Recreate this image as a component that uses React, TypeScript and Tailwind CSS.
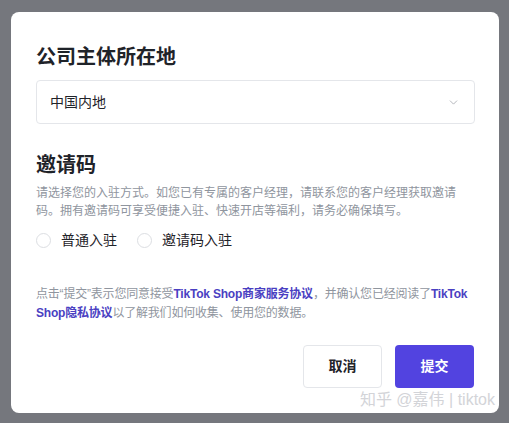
import { ChevronDown } from "lucide-react"

function Radio({ label }: { label: string }) {
  return (
    <label className="flex items-center gap-[10px] cursor-pointer">
      <span className="h-[15px] w-[15px] rounded-full border border-[#dcdee2] bg-white" />
      <span className="text-[14px] leading-[20px] text-[#1f2329]">{label}</span>
    </label>
  )
}

export default function App() {
  return (
    <div
      className="h-[423px] w-[509px] overflow-hidden bg-[#75777d] pl-[11px] pt-[12px]"
      style={{ fontFamily: "'Liberation Sans', 'Noto Sans CJK SC', sans-serif" }}
    >
      <div className="relative flex h-[401px] w-[488px] flex-col rounded-[8px] bg-white px-[25px] pt-[31px]">
        {/* Company location */}
        <h2 className="text-[20px] font-bold leading-[28px] text-[#1f2329]">公司主体所在地</h2>
        <div className="mt-[9px] flex h-[44px] w-[439px] items-center justify-between rounded-[4px] border border-[#e4e6ea] pl-[13px] pr-[14px]">
          <span className="text-[14px] text-[#1f2329]">中国内地</span>
          <ChevronDown size={13} strokeWidth={1.5} className="text-[#a3a6ad]" />
        </div>

        {/* Invite code */}
        <h2 className="mt-[27px] text-[20px] font-bold leading-[28px] text-[#1f2329]">邀请码</h2>
        <p className="mt-[5px] w-[426px] text-[12px] leading-[18px] text-[#8f959e]">
          请选择您的入驻方式。如您已有专属的客户经理，请联系您的客户经理获取邀请码。拥有邀请码可享受便捷入驻、快速开店等福利，请务必确保填写。
        </p>
        <div className="mt-[10px] flex items-center gap-[20px]">
          <Radio label="普通入驻" />
          <Radio label="邀请码入驻" />
        </div>

        {/* Terms */}
        <div className="mt-[35px] text-[12px] leading-[19px] text-[#8f959e]">
          <p className="whitespace-nowrap tracking-[-0.2px]">
            点击“提交”表示您同意接受
            <span className="font-bold text-[#4a3fc2]">TikTok Shop商家服务协议</span>
            ，并确认您已经阅读了<span className="font-bold text-[#4a3fc2]">TikTok</span>
          </p>
          <p className="whitespace-nowrap tracking-[-0.2px]">
            <span className="font-bold text-[#4a3fc2]">Shop隐私协议</span>以了解我们如何收集、使用您的数据。
          </p>
        </div>

        {/* Actions */}
        <div className="mt-[22px] flex justify-end gap-[13px]">
          <button className="h-[43px] w-[79px] rounded-[4px] border border-[#e4e6ea] bg-white text-[14px] font-bold text-[#1f2329]">
            取消
          </button>
          <button className="h-[43px] w-[79px] rounded-[4px] bg-[#5243e0] text-[14px] font-bold text-white">
            提交
          </button>
        </div>

        {/* Watermark */}
        <span className="absolute bottom-[3px] right-[4px] text-[16px] font-normal leading-[20px] text-[#d3d4d8]">
          知乎 @嘉伟 | tiktok
        </span>
      </div>
    </div>
  )
}
